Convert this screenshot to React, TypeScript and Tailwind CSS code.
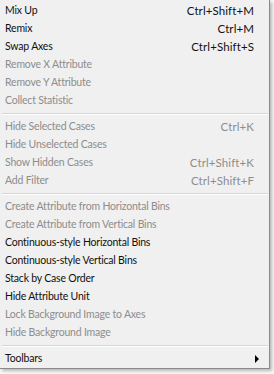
import React from "react";

type Item = { label: string; shortcut?: string; disabled?: boolean; submenu?: boolean };

const sections: Item[][] = [
  [
    { label: "Mix Up", shortcut: "Ctrl+Shift+M" },
    { label: "Remix", shortcut: "Ctrl+M" },
    { label: "Swap Axes", shortcut: "Ctrl+Shift+S" },
    { label: "Remove X Attribute", disabled: true },
    { label: "Remove Y Attribute", disabled: true },
    { label: "Collect Statistic", disabled: true },
  ],
  [
    { label: "Hide Selected Cases", shortcut: "Ctrl+K", disabled: true },
    { label: "Hide Unselected Cases", disabled: true },
    { label: "Show Hidden Cases", shortcut: "Ctrl+Shift+K", disabled: true },
    { label: "Add Filter", shortcut: "Ctrl+Shift+F", disabled: true },
  ],
  [
    { label: "Create Attribute from Horizontal Bins", disabled: true },
    { label: "Create Attribute from Vertical Bins", disabled: true },
    { label: "Continuous-style Horizontal Bins" },
    { label: "Continuous-style Vertical Bins" },
    { label: "Stack by Case Order" },
    { label: "Hide Attribute Unit" },
    { label: "Lock Background Image to Axes", disabled: true },
    { label: "Hide Background Image", disabled: true },
  ],
  [{ label: "Toolbars", submenu: true }],
];

function Row({ item }: { item: Item }) {
  return (
    <div
      className={`flex h-[18px] items-center pl-[5px] pr-[15px] ${
        item.disabled ? "text-[#8d8d8d]" : "text-[#111]"
      }`}
    >
      <span className="flex-1 whitespace-nowrap text-[10.5px] tracking-[-0.2px]">{item.label}</span>
      {item.shortcut && (
        <span className="whitespace-nowrap text-[11.5px] tracking-[0.1px]">{item.shortcut}</span>
      )}
      {item.submenu && (
        <svg width="5" height="8" viewBox="0 0 5 8" className="mr-[-6px]">
          <path d="M0 0 L4 4 L0 8 Z" fill="#000" />
        </svg>
      )}
    </div>
  );
}

function Separator() {
  return (
    <div className="flex h-[8px] flex-col justify-center pl-[2px] pr-[1px]">
      <div className="h-px bg-[#d7d7d7]" />
      <div className="h-px bg-white" />
    </div>
  );
}

export default function App() {
  return (
    <div className="h-[374px] w-[274px] bg-[#f7f7f7]">
      <div
        className="flex h-[369px] w-[270px] flex-col border-b border-r border-[#8a8a8a] bg-[#f0f0f0] pt-[2px] shadow-[2px_2px_3px_rgba(0,0,0,0.25)]"
        style={{ fontFamily: 'Lato, "Noto Sans", sans-serif' }}
      >
        {sections.map((sec, i) => (
          <React.Fragment key={i}>
            {i > 0 && <Separator />}
            {sec.map((it) => (
              <Row key={it.label} item={it} />
            ))}
          </React.Fragment>
        ))}
      </div>
    </div>
  );
}
